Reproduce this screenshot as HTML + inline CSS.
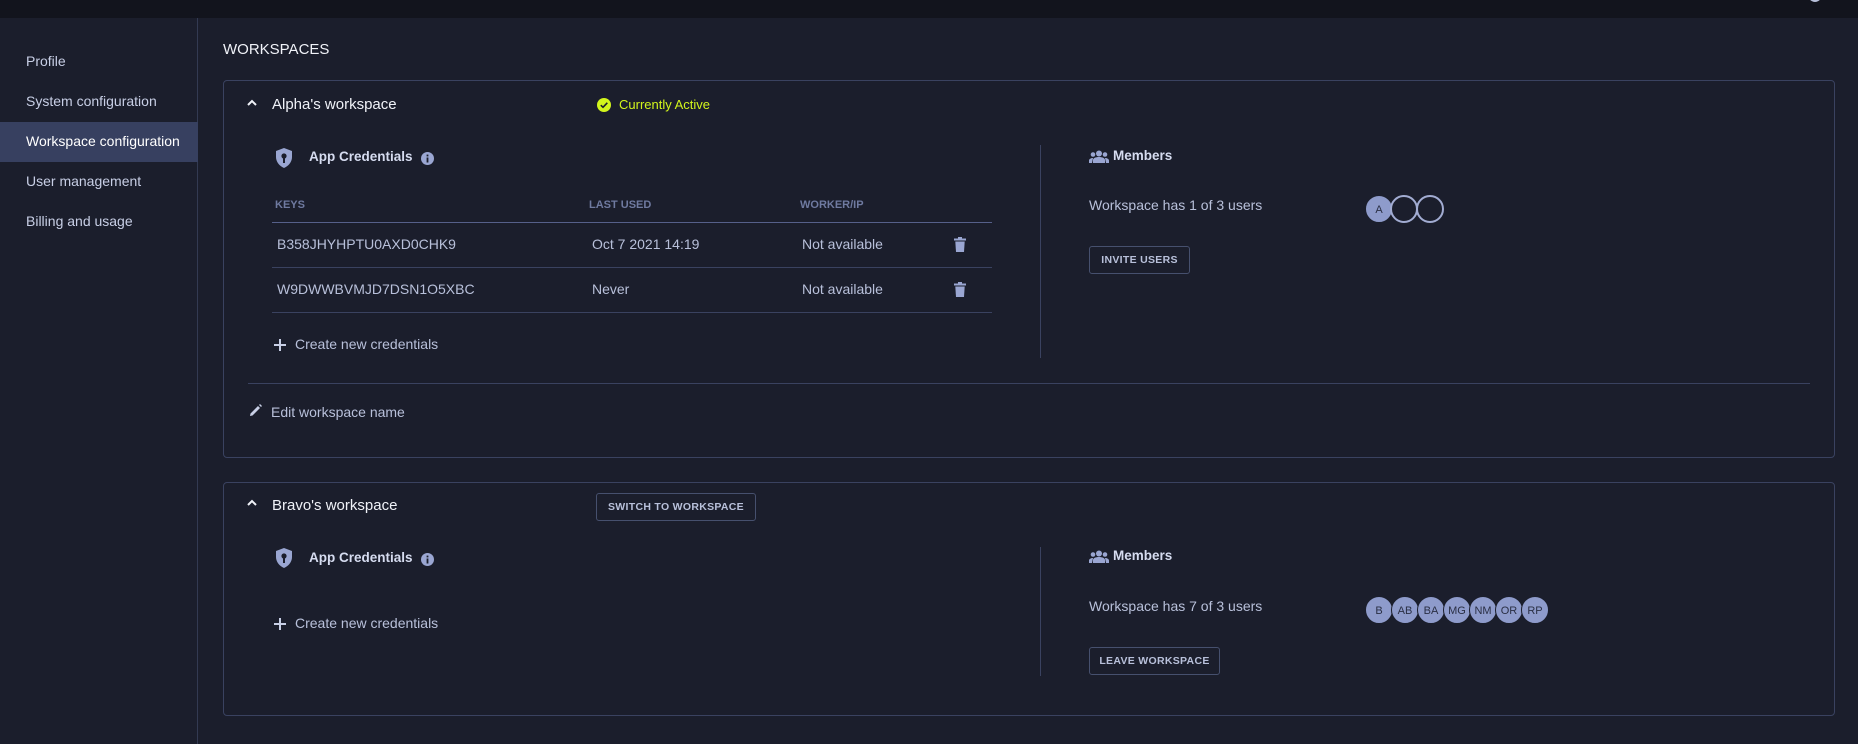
<!DOCTYPE html>
<html><head><meta charset="utf-8"><style>
*{margin:0;padding:0;box-sizing:border-box}
body{width:1858px;height:744px;background:#1b1e2c;font-family:"Liberation Sans",sans-serif;color:#b8c0da;position:relative;overflow:hidden;font-size:14px}
.a{position:absolute;white-space:nowrap}
.top{left:0;top:0;width:1858px;height:18px;background:#12141d}
.side{left:0;top:18px;width:198px;height:726px;border-right:1px solid #333a52;background:#1b1e2c}
.nav{left:26px;font-size:14px;color:#c8cfe6}
.sel{left:0;top:122px;width:198px;height:40px;background:#374060}
.card{border:1px solid #3a4260;border-radius:4px}
.hd{font-size:15px;color:#f0f2f8}
.sm{font-size:11px;color:#6f7aa0;font-weight:bold}
.hl{height:1px;background:#3a4260}
.btn{border:1px solid #46506e;border-radius:3px;font-size:10.5px;font-weight:bold;color:#b8c0da;text-align:center;letter-spacing:.3px}
.av{width:28px;height:28px;border-radius:50%;background:#8e9bcb;color:#2a2f44;font-size:11px;text-align:center;line-height:28px;border:1.5px solid #1b1e2c}
.oc{width:28px;height:28px;border-radius:50%;border:2px solid #a2acd2;background:#1b1e2c}
.bold{font-weight:bold;color:#d6dcf0;font-size:13.5px}
</style></head><body>
<div class="a top"></div>
<div class="a" style="left:1806px;top:-24px;width:18px;height:26px;border-radius:50%;background:#b8c0da"></div>
<div class="a side"></div>
<div class="a sel"></div>
<div class="a nav" style="top:53px">Profile</div>
<div class="a nav" style="top:93px">System configuration</div>
<div class="a nav" style="top:133px;color:#fff">Workspace configuration</div>
<div class="a nav" style="top:173px">User management</div>
<div class="a nav" style="top:213px">Billing and usage</div>

<div class="a" style="left:223px;top:41px;font-size:15px;color:#f0f2f8">WORKSPACES</div>

<!-- card 1 -->
<div class="a card" style="left:223px;top:80px;width:1612px;height:378px"></div>
<svg class="a" style="left:245px;top:97px" width="14" height="12" viewBox="0 0 14 12"><path d="M3 8 L7 4 L11 8" stroke="#f0f2f8" stroke-width="2" fill="none"/></svg>
<div class="a hd" style="left:272px;top:96px">Alpha's workspace</div>
<svg class="a" style="left:597px;top:98px" width="14" height="14"><circle cx="7" cy="7" r="7" fill="#d2f51c"/><path d="M3.8 7.2 L6 9.3 L10.3 4.8" stroke="#1b1e2c" stroke-width="1.6" fill="none"/></svg>
<div class="a" style="left:619px;top:97px;font-size:13px;color:#d2f51c">Currently Active</div>

<svg class="a" style="left:275px;top:147px" width="18" height="22" viewBox="0 0 18 22"><path d="M9 1 L17 4 V10 C17 15 13.5 19 9 21 C4.5 19 1 15 1 10 V4 Z" fill="#9aa6d2"/><circle cx="9" cy="9" r="2.6" fill="#1b1e2c"/><rect x="8" y="10" width="2" height="6" fill="#1b1e2c"/></svg>
<div class="a bold" style="left:309px;top:149px">App Credentials</div>
<svg class="a" style="left:421px;top:152px" width="13" height="13"><circle cx="6.5" cy="6.5" r="6.5" fill="#9aa6d2"/><rect x="5.6" y="5.5" width="1.8" height="5" fill="#1b1e2c"/><rect x="5.6" y="2.6" width="1.8" height="1.8" fill="#1b1e2c"/></svg>

<div class="a sm" style="left:275px;top:199px">KEYS</div>
<div class="a sm" style="left:589px;top:199px">LAST USED</div>
<div class="a sm" style="left:800px;top:199px">WORKER/IP</div>
<div class="a hl" style="left:272px;top:222px;width:720px;background:#56608a"></div>
<div class="a" style="left:277px;top:236px">B358JHYHPTU0AXD0CHK9</div>
<div class="a" style="left:592px;top:236px">Oct 7 2021 14:19</div>
<div class="a" style="left:802px;top:236px">Not available</div>
<div class="a hl" style="left:272px;top:267px;width:720px"></div>
<div class="a" style="left:277px;top:281px">W9DWWBVMJD7DSN1O5XBC</div>
<div class="a" style="left:592px;top:281px">Never</div>
<div class="a" style="left:802px;top:281px">Not available</div>
<div class="a hl" style="left:272px;top:312px;width:720px"></div>
<svg class="a" style="left:954px;top:237px" width="12" height="15" viewBox="0 0 12 15"><rect x="0" y="1.5" width="12" height="2" fill="#9aa6d2"/><rect x="4" y="0" width="4" height="2" fill="#9aa6d2"/><path d="M1.3 4.5 H10.7 L10 15 H2 Z" fill="#9aa6d2"/></svg>
<svg class="a" style="left:954px;top:282px" width="12" height="15" viewBox="0 0 12 15"><rect x="0" y="1.5" width="12" height="2" fill="#9aa6d2"/><rect x="4" y="0" width="4" height="2" fill="#9aa6d2"/><path d="M1.3 4.5 H10.7 L10 15 H2 Z" fill="#9aa6d2"/></svg>
<svg class="a" style="left:274px;top:339px" width="12" height="12"><path d="M6 0 V12 M0 6 H12" stroke="#c8cfe6" stroke-width="2"/></svg>
<div class="a" style="left:295px;top:336px">Create new credentials</div>

<div class="a" style="left:1040px;top:145px;width:1px;height:213px;background:#3a4260"></div>
<svg class="a" style="left:1089px;top:150px" width="20" height="13" viewBox="0 0 20 13"><circle cx="10" cy="3.5" r="3" fill="#9aa6d2"/><circle cx="4" cy="4.5" r="2.3" fill="#9aa6d2"/><circle cx="16" cy="4.5" r="2.3" fill="#9aa6d2"/><path d="M4 13 V10 C4 8 7 7 10 7 C13 7 16 8 16 10 V13 Z" fill="#9aa6d2"/><path d="M0 13 V10.5 C0 9 2 8 4 8 L3 13 Z M20 13 V10.5 C20 9 18 8 16 8 L17 13Z" fill="#9aa6d2"/></svg>
<div class="a bold" style="left:1113px;top:148px">Members</div>
<div class="a" style="left:1089px;top:197px">Workspace has 1 of 3 users</div>
<div class="a av" style="left:1365px;top:195px">A</div>
<div class="a oc" style="left:1390px;top:195px"></div>
<div class="a oc" style="left:1416px;top:195px"></div>
<div class="a btn" style="left:1089px;top:246px;width:101px;height:28px;line-height:26px">INVITE USERS</div>

<div class="a hl" style="left:248px;top:383px;width:1562px"></div>
<svg class="a" style="left:249px;top:404px" width="13" height="13"><path d="M1 12 L1.5 9.5 L9 2 L11 4 L3.5 11.5 Z M10 1 L11 0 L13 2 L12 3Z" fill="#c8cfe6"/></svg>
<div class="a" style="left:271px;top:404px">Edit workspace name</div>

<!-- card 2 -->
<div class="a card" style="left:223px;top:482px;width:1612px;height:234px"></div>
<svg class="a" style="left:245px;top:497px" width="14" height="12" viewBox="0 0 14 12"><path d="M3 8 L7 4 L11 8" stroke="#f0f2f8" stroke-width="2" fill="none"/></svg>
<div class="a hd" style="left:272px;top:497px">Bravo's workspace</div>
<div class="a btn" style="left:596px;top:493px;width:160px;height:28px;line-height:26px">SWITCH TO WORKSPACE</div>

<svg class="a" style="left:275px;top:547px" width="18" height="22" viewBox="0 0 18 22"><path d="M9 1 L17 4 V10 C17 15 13.5 19 9 21 C4.5 19 1 15 1 10 V4 Z" fill="#9aa6d2"/><circle cx="9" cy="9" r="2.6" fill="#1b1e2c"/><rect x="8" y="10" width="2" height="6" fill="#1b1e2c"/></svg>
<div class="a bold" style="left:309px;top:550px">App Credentials</div>
<svg class="a" style="left:421px;top:553px" width="13" height="13"><circle cx="6.5" cy="6.5" r="6.5" fill="#9aa6d2"/><rect x="5.6" y="5.5" width="1.8" height="5" fill="#1b1e2c"/><rect x="5.6" y="2.6" width="1.8" height="1.8" fill="#1b1e2c"/></svg>
<svg class="a" style="left:274px;top:618px" width="12" height="12"><path d="M6 0 V12 M0 6 H12" stroke="#c8cfe6" stroke-width="2"/></svg>
<div class="a" style="left:295px;top:615px">Create new credentials</div>

<div class="a" style="left:1040px;top:547px;width:1px;height:129px;background:#3a4260"></div>
<svg class="a" style="left:1089px;top:550px" width="20" height="13" viewBox="0 0 20 13"><circle cx="10" cy="3.5" r="3" fill="#9aa6d2"/><circle cx="4" cy="4.5" r="2.3" fill="#9aa6d2"/><circle cx="16" cy="4.5" r="2.3" fill="#9aa6d2"/><path d="M4 13 V10 C4 8 7 7 10 7 C13 7 16 8 16 10 V13 Z" fill="#9aa6d2"/><path d="M0 13 V10.5 C0 9 2 8 4 8 L3 13 Z M20 13 V10.5 C20 9 18 8 16 8 L17 13Z" fill="#9aa6d2"/></svg>
<div class="a bold" style="left:1113px;top:548px">Members</div>
<div class="a" style="left:1089px;top:598px">Workspace has 7 of 3 users</div>
<div class="a av" style="left:1365px;top:596px">B</div>
<div class="a av" style="left:1391px;top:596px">AB</div>
<div class="a av" style="left:1417px;top:596px">BA</div>
<div class="a av" style="left:1443px;top:596px">MG</div>
<div class="a av" style="left:1469px;top:596px">NM</div>
<div class="a av" style="left:1495px;top:596px">OR</div>
<div class="a av" style="left:1521px;top:596px">RP</div>
<div class="a btn" style="left:1089px;top:647px;width:131px;height:28px;line-height:26px">LEAVE WORKSPACE</div>
</body></html>
